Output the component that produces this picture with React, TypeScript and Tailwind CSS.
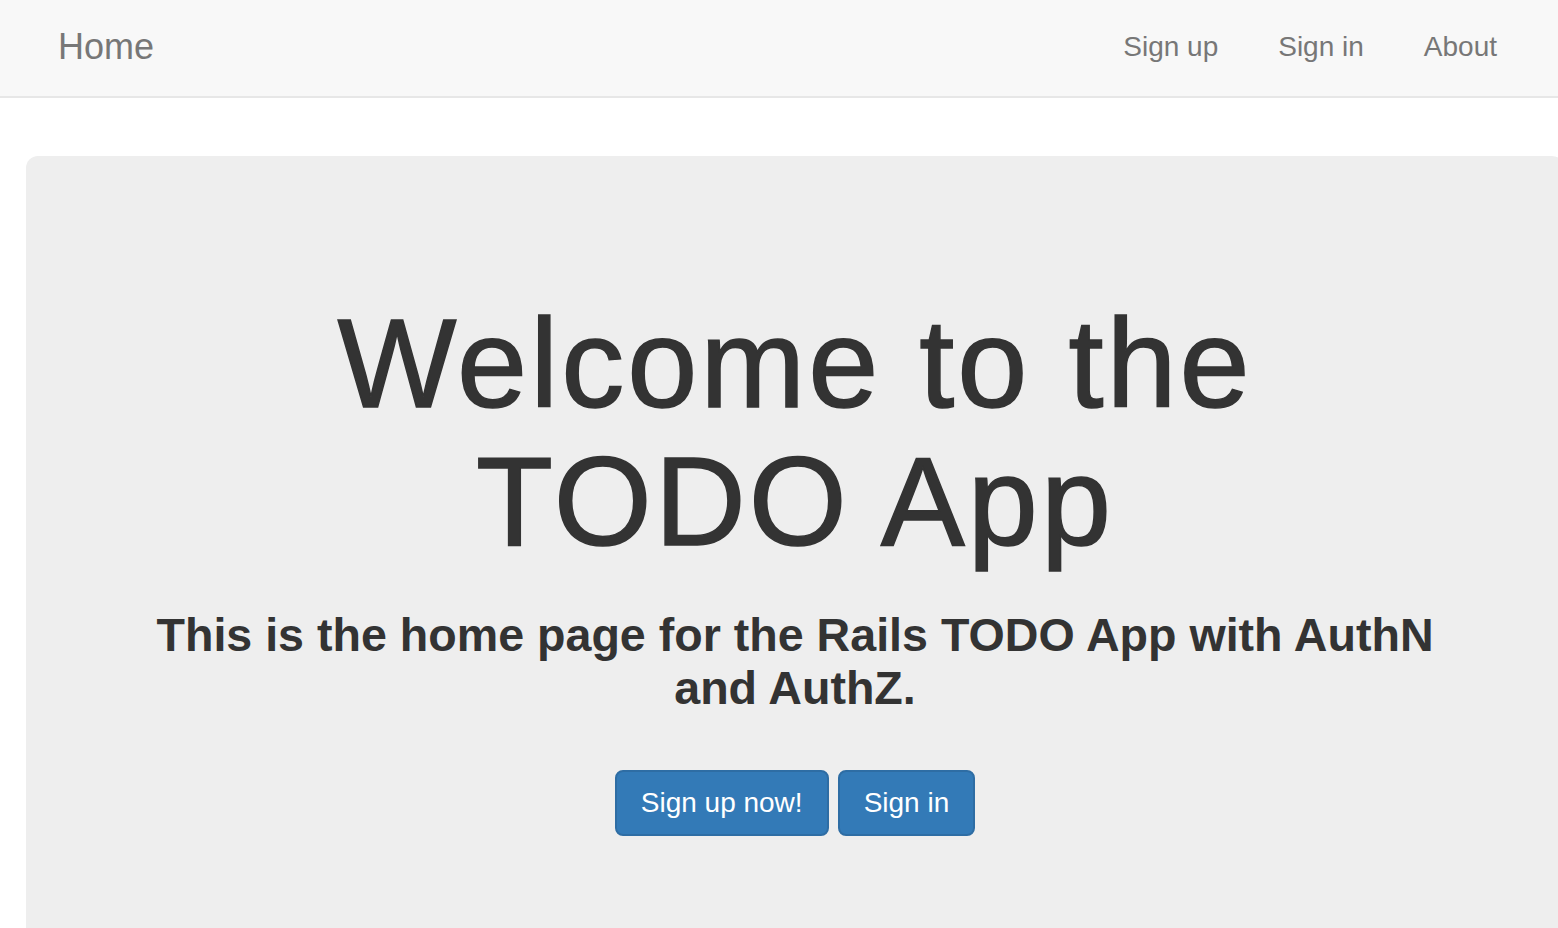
import React from 'react';

const font = { fontFamily: '"Liberation Sans", Arial, sans-serif' };

function Navbar() {
  return (
    <nav className="h-[98px] bg-[#f8f8f8] border-b-2 border-[#e7e7e7] flex items-center justify-between">
      <a className="pl-[58px] text-[36px] leading-none text-[#777] pb-[3px]">Home</a>
      <ul className="flex items-center pr-[31px] text-[28px] leading-none text-[#777] pb-[2px]">
        <li className="px-[30px]">Sign up</li>
        <li className="px-[30px]">Sign in</li>
        <li className="px-[30px]">About</li>
      </ul>
    </nav>
  );
}

export default function App() {
  return (
    <div className="w-full min-h-[928px] bg-white overflow-hidden" style={font}>
      <Navbar />
      <div className="mt-[58px] ml-[26px] w-[1538px] h-[790px] bg-[#eeeeee] rounded-[12px] pt-[139px] text-center text-[#333]">
        <h1 className="text-[126px] leading-[138px] tracking-[3px] font-normal [-webkit-text-stroke:1.5px_#333]">
          Welcome to the
          <br />
          TODO App
        </h1>
        <p className="mt-[38px] px-[120px] text-[46.6px] leading-[53px] font-bold">
          This is the home page for the Rails TODO App with AuthN and AuthZ.
        </p>
        <div className="mt-[55px] flex justify-center gap-[9px]">
          <button className="h-[66px] px-[24px] bg-[#337ab7] border-2 border-[#2e6da4] rounded-[8px] text-white text-[28px] leading-none">
            Sign up now!
          </button>
          <button className="h-[66px] px-[24px] bg-[#337ab7] border-2 border-[#2e6da4] rounded-[8px] text-white text-[28px] leading-none">
            Sign in
          </button>
        </div>
      </div>
    </div>
  );
}
